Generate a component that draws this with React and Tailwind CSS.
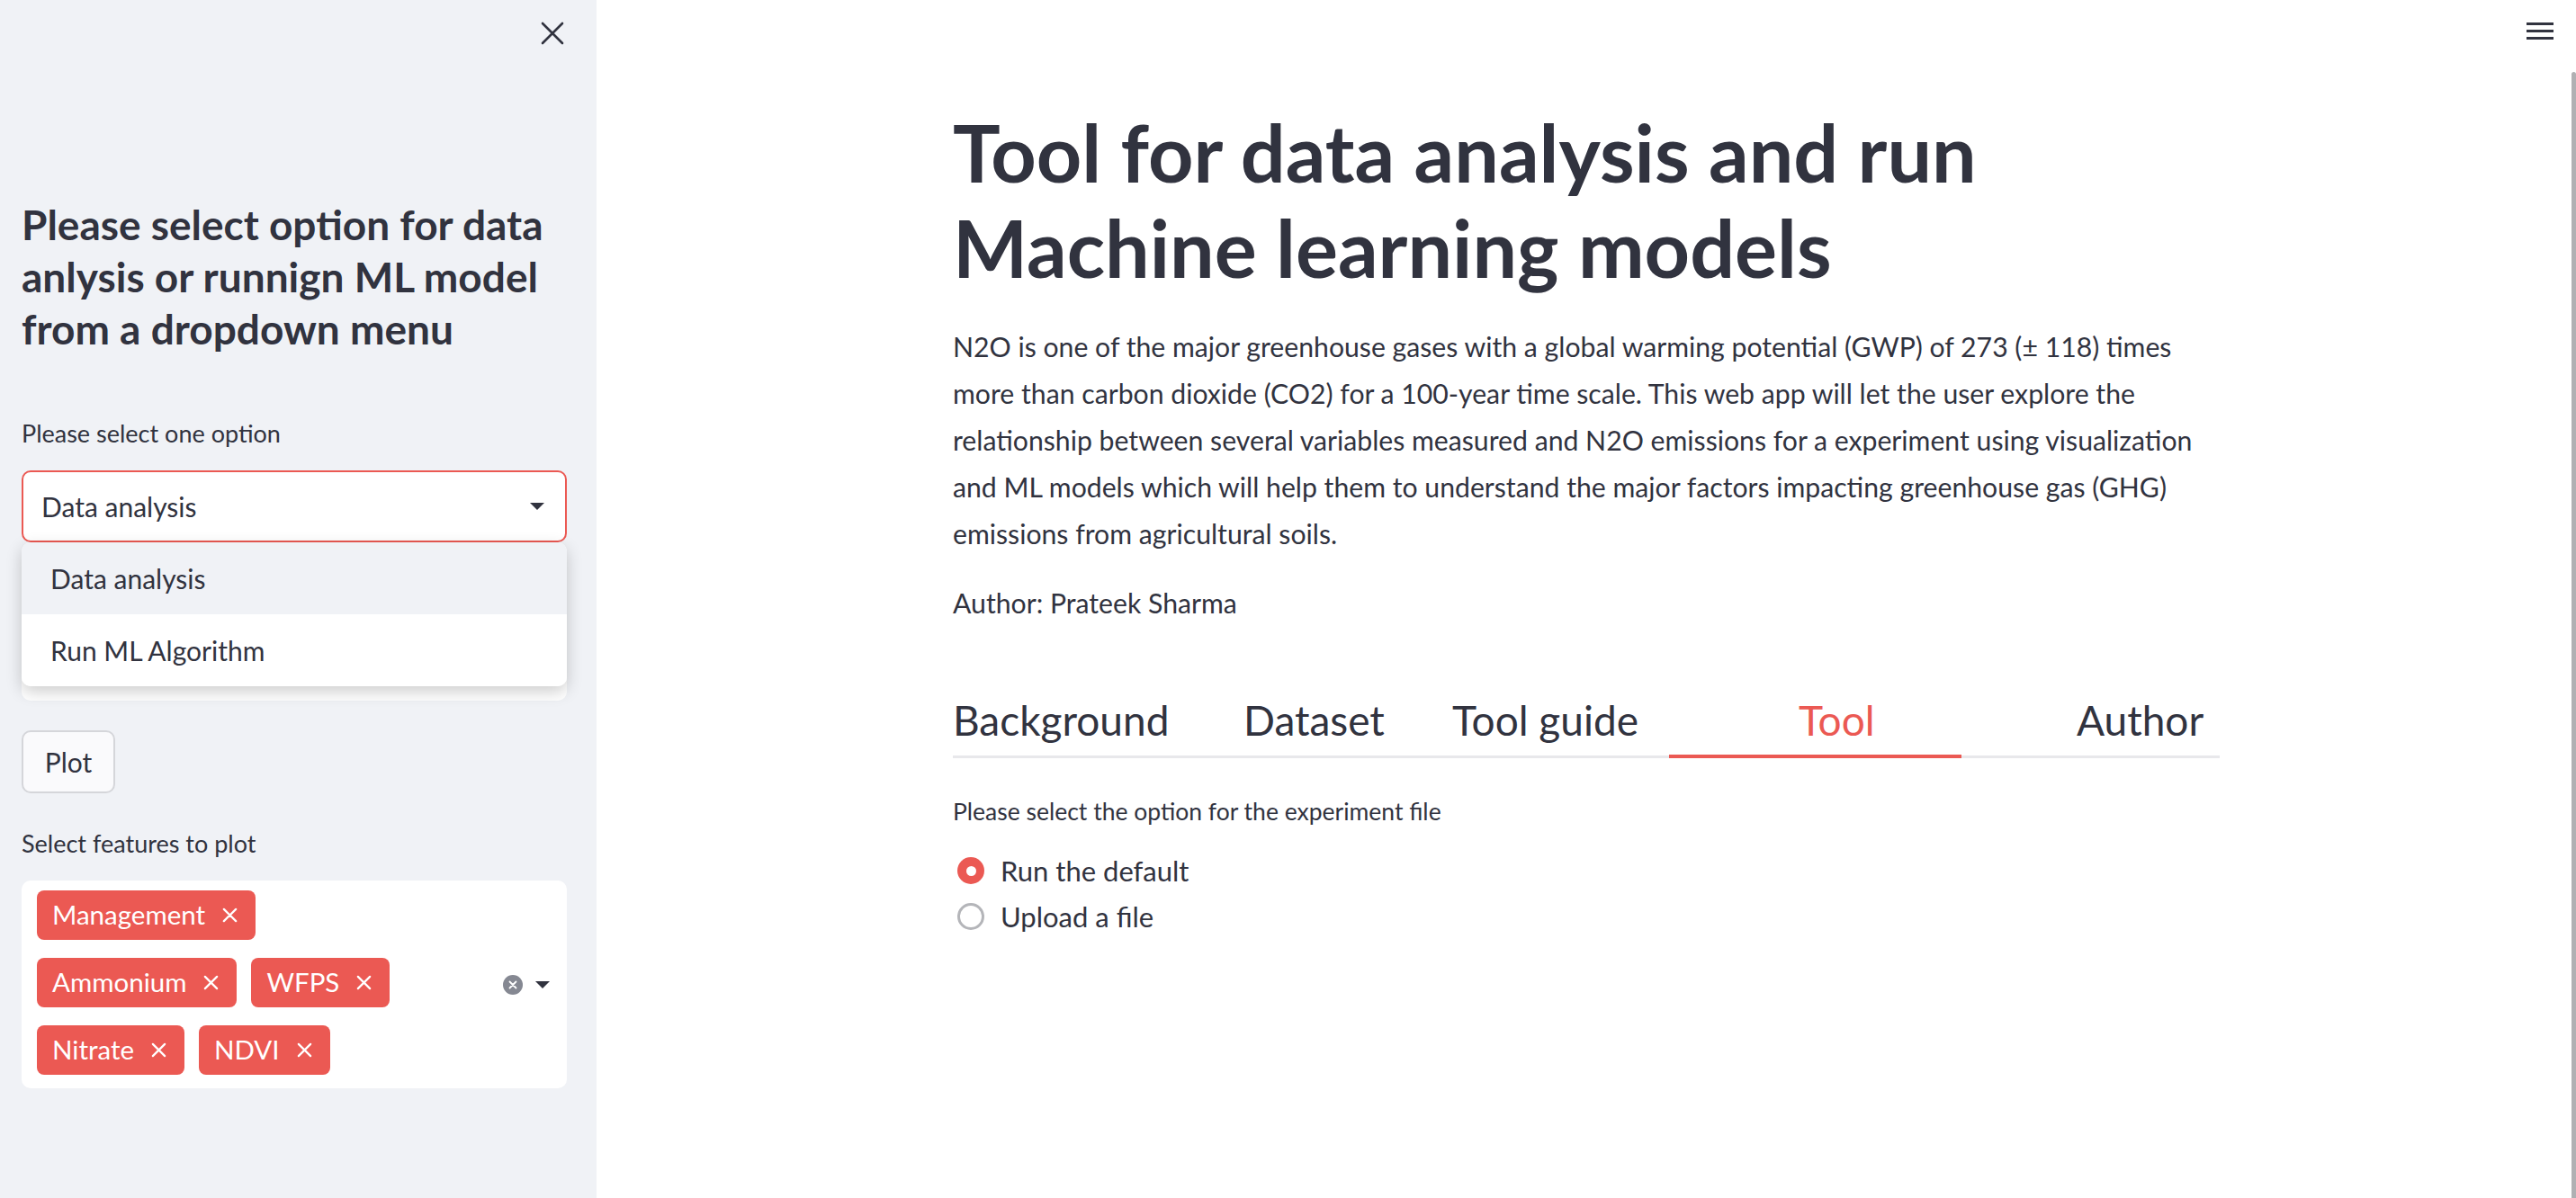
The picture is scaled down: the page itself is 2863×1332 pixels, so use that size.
import React from "react";

function CloseIcon() {
  return (
    <svg viewBox="0 0 26 26" className="w-[26px] h-[26px]" fill="none" stroke="#31333f" strokeWidth="2.6" strokeLinecap="round">
      <path d="M2 2L24 24M24 2L2 24" />
    </svg>
  );
}

function Caret({ className }) {
  return (
    <svg viewBox="0 0 16 8" className={className} fill="#31333f">
      <path d="M0 0H16L8 8Z" />
    </svg>
  );
}

function Tag({ label }) {
  return (
    <div className="flex h-[55px] items-center gap-[18px] rounded-[8px] bg-[#eb5953] pl-[17px] pr-[19px] text-[29.5px] text-white">
      <span>{label}</span>
      <svg viewBox="0 0 20 20" className="w-[19px] h-[19px]" fill="none" stroke="#ffffff" strokeWidth="2.4" strokeLinecap="round">
        <path d="M3 3L17 17M17 3L3 17" />
      </svg>
    </div>
  );
}

function Radio({ checked, label }) {
  return (
    <div className="flex h-[44px] items-center gap-[18px] pl-[5px]">
      {checked ? (
        <span className="flex h-[30px] w-[30px] items-center justify-center rounded-full bg-[#eb5953]">
          <span className="h-[11px] w-[11px] rounded-full bg-white" />
        </span>
      ) : (
        <span className="h-[30px] w-[30px] rounded-full border-[3px] border-[#b4b5b9] bg-white" />
      )}
      <span className="text-[31px]">{label}</span>
    </div>
  );
}

export default function App() {
  return (
    <div className="flex h-[1332px] w-[2863px] overflow-hidden bg-white font-['Lato',sans-serif] text-[#31333f]">
      {/* Sidebar */}
      <aside className="relative w-[663px] shrink-0 bg-[#f0f2f6] pl-[24px] pr-[33px]">
        <button className="absolute left-[601px] top-[24px] flex h-[26px] w-[26px] items-center justify-center">
          <CloseIcon />
        </button>

        <h2 className="pt-[221px] text-[46px] font-bold leading-[58px]">
          Please select option for data anlysis or runnign ML model from a dropdown menu
        </h2>

        <p className="mt-[67px] text-[27px] leading-[40px]">Please select one option</p>

        <div className="relative mt-[21px]">
          <div className="flex h-[80px] items-center justify-between rounded-[10px] border-2 border-[#eb5953] bg-white pl-[20px] pr-[23px] text-[30px]">
            <span>Data analysis</span>
            <Caret className="h-[8px] w-[16px]" />
          </div>
          <div className="absolute left-0 right-0 top-[80px] z-10 overflow-hidden rounded-[10px] bg-white text-[30px] shadow-[0_6px_18px_rgba(0,0,0,0.2)]">
            <div className="flex h-[80px] items-center bg-[#f0f2f6] pl-[32px]">Data analysis</div>
            <div className="flex h-[80px] items-center bg-white pl-[32px]">Run ML Algorithm</div>
          </div>
        </div>

        <div className="mt-[96px] h-[80px] rounded-[10px] bg-white" />

        <button className="mt-[33px] flex h-[70px] w-[104px] items-center justify-center rounded-[10px] border-2 border-[#d5d6da] bg-[#fafafc] text-[30px]">
          Plot
        </button>

        <p className="mt-[36px] text-[27px] leading-[40px]">Select features to plot</p>

        <div className="relative mt-[21px] h-[231px] rounded-[10px] bg-white pl-[17px] pt-[11px]">
          <div className="flex flex-col gap-[20px]">
            <div className="flex gap-[16px]">
              <Tag label="Management" />
            </div>
            <div className="flex gap-[16px]">
              <Tag label="Ammonium" />
              <Tag label="WFPS" />
            </div>
            <div className="flex gap-[16px]">
              <Tag label="Nitrate" />
              <Tag label="NDVI" />
            </div>
          </div>
          <div className="absolute right-[19px] top-1/2 flex -translate-y-1/2 items-center gap-[14px]">
            <svg viewBox="0 0 22 22" className="h-[22px] w-[22px]">
              <circle cx="11" cy="11" r="11" fill="#858892" />
              <path d="M7.5 7.5L14.5 14.5M14.5 7.5L7.5 14.5" stroke="#ffffff" strokeWidth="1.8" strokeLinecap="round" />
            </svg>
            <Caret className="h-[8px] w-[16px]" />
          </div>
        </div>
      </aside>

      {/* Main */}
      <main className="relative flex-1 bg-white">
        <div className="absolute right-[25px] top-[25px] flex w-[30px] flex-col gap-[5px]">
          <span className="h-[3px] w-full bg-[#31333f]" />
          <span className="h-[3px] w-full bg-[#31333f]" />
          <span className="h-[3px] w-full bg-[#31333f]" />
        </div>
        <div className="absolute bottom-0 right-0 top-[80px] w-[5px] rounded-t-[3px] bg-[#b0b0b3]" />

        <div className="mx-auto w-[1408px] pt-[116px]">
          <h1 className="text-[88px] font-bold leading-[106px]">
            Tool for data analysis and run Machine learning models
          </h1>

          <p className="mt-[31px] whitespace-nowrap text-[30.2px] leading-[52px]">
            N2O is one of the major greenhouse gases with a global warming potential (GWP) of 273 (± 118) times
            <br />
            more than carbon dioxide (CO2) for a 100-year time scale. This web app will let the user explore the
            <br />
            relationship between several variables measured and N2O emissions for a experiment using visualization
            <br />
            and ML models which will help them to understand the major factors impacting greenhouse gas (GHG)
            <br />
            emissions from agricultural soils.
          </p>

          <p className="mt-[25px] text-[30.2px] leading-[52px]">Author: Prateek Sharma</p>

          <div className="mt-[75px] flex border-b-[3px] border-[#e8e8eb] text-[46px] leading-[60px]">
            <div className="w-[323px] pb-[9px]">Background</div>
            <div className="w-[232px] pb-[9px]">Dataset</div>
            <div className="w-[241px] pb-[9px]">Tool guide</div>
            <div className="relative w-[325px] pb-[9px] pl-[144px] text-[#eb5953]">
              Tool
              <span className="absolute -bottom-[3px] left-0 right-0 h-[4px] bg-[#eb5953]" />
            </div>
            <div className="pb-[9px] pl-[128px]">Author</div>
          </div>

          <p className="mt-[39px] text-[26.5px] leading-[40px]">Please select the option for the experiment file</p>

          <div className="mt-[24px] flex flex-col gap-[7px]">
            <Radio checked label="Run the default" />
            <Radio label="Upload a file" />
          </div>
        </div>
      </main>
    </div>
  );
}
